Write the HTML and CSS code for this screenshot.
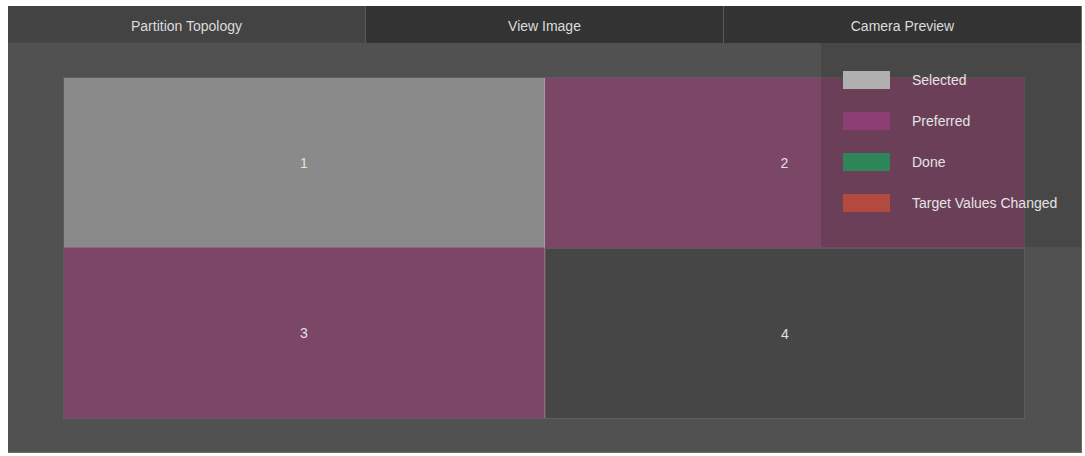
FILE: index.html
```html
<!DOCTYPE html>
<html>
<head>
<meta charset="utf-8">
<link rel="stylesheet" href="styles.css">
</head>
<body>
<div class="frame">
  <div class="tabs">
    <div class="tab active">Partition Topology</div>
    <div class="tab">View Image</div>
    <div class="tab">Camera Preview</div>
  </div>
  <div class="body">
    <div class="grid">
      <div class="cell selected">1</div>
      <div class="cell preferred">2</div>
      <div class="cell preferred">3</div>
      <div class="cell empty">4</div>
    </div>
    <div class="legend">
      <div class="item"><span class="sw sw-selected"></span><span class="lbl">Selected</span></div>
      <div class="item"><span class="sw sw-preferred"></span><span class="lbl">Preferred</span></div>
      <div class="item"><span class="sw sw-done"></span><span class="lbl">Done</span></div>
      <div class="item"><span class="sw sw-target"></span><span class="lbl">Target Values Changed</span></div>
    </div>
  </div>
</div>
</body>
</html>
```
FILE: styles.css
```css
html, body {
  margin: 0;
  padding: 0;
  background: #ffffff;
}
body {
  font-family: "Liberation Sans", Arial, sans-serif;
  padding: 6px 3px 0 8px;
}
.frame {
  height: 447px;
  display: flex;
  flex-direction: column;
  background: #515151;
  border-right: 1px solid #6a6a6a;
  border-bottom: 1px solid #6a6a6a;
  box-sizing: border-box;
}
.tabs {
  height: 37px;
  display: flex;
  flex: none;
}
.tab {
  flex: 1;
  display: flex;
  align-items: center;
  justify-content: center;
  background: #333333;
  color: #dcdcdc;
  font-size: 14px;
  padding-top: 3px;
  box-sizing: border-box;
  border-left: 1px solid #5a5a5a;
}
.tab:first-child {
  border-left: none;
}
.tab.active {
  background: #434343;
  border-bottom: 1px solid #4a4a4a;
}
.body {
  flex: 1;
  position: relative;
  padding: 35px 57px 0 56px;
}
.grid {
  width: 960px;
  height: 340px;
  display: grid;
  grid-template-columns: 481px 479px;
  grid-template-rows: 170px 170px;
  outline: 1px solid #5e5e5e;
}
.cell {
  display: flex;
  align-items: center;
  justify-content: center;
  color: #e2e2e2;
  font-size: 14px;
  box-sizing: border-box;
}
.cell.selected {
  background: #8a8a8a;
  border-right: 1px solid #a0a0a0;
  border-bottom: 1px solid #8a6a80;
}
.cell.preferred {
  background: #7c4766;
}
.cell.preferred:nth-child(3) {
  border-right: 1px solid #8e6a80;
}
.cell.empty {
  background: #464646;
  border-left: 1px solid #5a5a5a;
  border-top: 1px solid #5a5a5a;
}
.legend {
  position: absolute;
  top: 0;
  right: 0;
  width: 260px;
  height: 204px;
  background: rgba(25, 25, 25, 0.17);
  box-sizing: border-box;
  padding: 28px 0 0 22px;
  display: flex;
  flex-direction: column;
  gap: 23px;
}
.item {
  display: flex;
  align-items: center;
  height: 18px;
}
.sw {
  width: 47px;
  height: 18px;
  margin-right: 22px;
  flex: none;
}
.sw-selected { background: #b0b0b0; }
.sw-preferred { background: #8d3f74; }
.sw-done { background: #2e8557; }
.sw-target { background: #b24a3f; }
.lbl {
  color: #e4e4e4;
  font-size: 14px;
}
```
